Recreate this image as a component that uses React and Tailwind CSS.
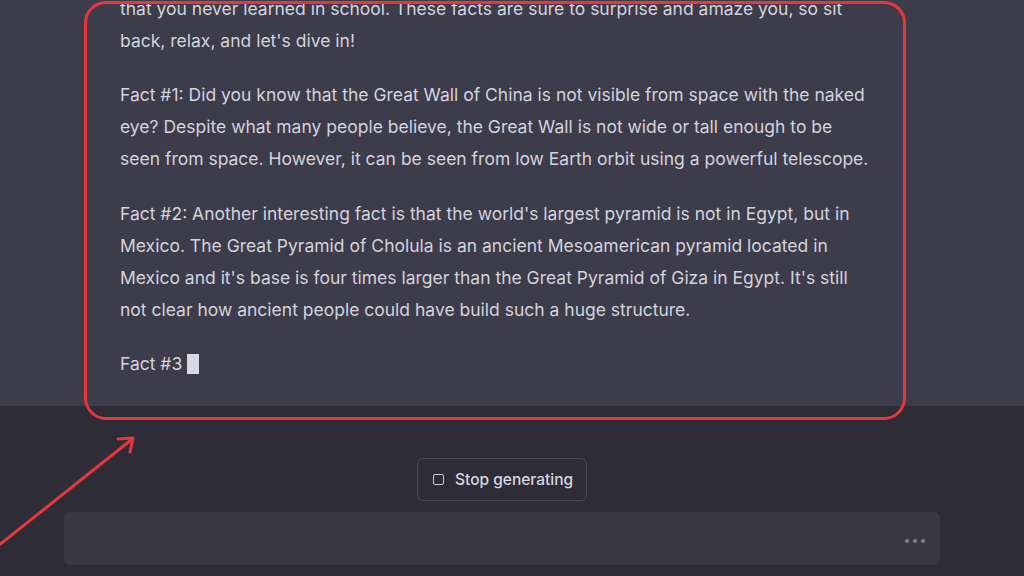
import React from "react";

export default function App() {
  const font = { fontFamily: "Inter, 'Noto Sans', sans-serif" };
  return (
    <div className="relative w-[1024px] h-[576px] overflow-hidden bg-[#2e2d37]" style={font}>
      {/* assistant message */}
      <div className="h-[406px] bg-[#3d3c4a] overflow-hidden">
        <div className="ml-[120px] w-[750px] -mt-[7px] text-[17.5px] leading-[32px] text-[#d3d3dd]">
          <p className="mb-[22px]">
            that you never learned in school. These facts are sure to surprise and amaze you, so sit back, relax, and let's dive in!
          </p>
          <p className="mb-[23px]">
            Fact #1: Did you know that the Great Wall of China is not visible from space with the naked eye? Despite what many people believe, the Great Wall is not wide or tall enough to be seen from space. However, it can be seen from low Earth orbit using a powerful telescope.
          </p>
          <p className="mb-[22px]">
            Fact #2: Another interesting fact is that the world's largest pyramid is not in Egypt, but in Mexico. The Great Pyramid of Cholula is an ancient Mesoamerican pyramid located in Mexico and it's base is four times larger than the Great Pyramid of Giza in Egypt. It's still not clear how ancient people could have build such a huge structure.
          </p>
          <p className="flex items-center">
            Fact #3
            <span className="ml-[5px] inline-block w-[12px] h-[20px] bg-[#d9d9e3]" />
          </p>
        </div>
      </div>

      {/* bottom area */}
      <div className="flex flex-col items-center pt-[52px]">
        <button className="mr-[20px] flex items-center h-[43px] w-[170px] pl-[15px] rounded-[6px] border border-[#4a4955] bg-[#2e2d37] text-[15.5px] text-[#d6d6e0]">
          <span className="w-[11px] h-[11px] border-[1.5px] border-[#c8c8d2] rounded-[2px]" />
          <span className="ml-[11px] font-medium">Stop generating</span>
        </button>
      </div>
      <div className="absolute left-[64px] top-[512px] w-[876px] h-[53px] rounded-[6px] bg-[#393843] flex items-center justify-end pr-[15px]">
        <div className="flex gap-[4px] mt-[4px]">
          <span className="w-[4px] h-[4px] rounded-full bg-[#80808f]" />
          <span className="w-[4px] h-[4px] rounded-full bg-[#80808f]" />
          <span className="w-[4px] h-[4px] rounded-full bg-[#80808f]" />
        </div>
      </div>

      {/* annotation overlay */}
      <div className="absolute left-[84px] top-[1px] w-[822px] h-[419px] rounded-[22px] border-[3px] border-[#e5383d] pointer-events-none" />
      <svg className="absolute left-0 top-0 pointer-events-none" width="1024" height="576">
        <line x1="-2" y1="546" x2="131" y2="440" stroke="#e5383d" strokeWidth="3" strokeLinecap="round" />
        <path d="M118 439 L133 438 L130 452" fill="none" stroke="#e5383d" strokeWidth="3" strokeLinecap="round" strokeLinejoin="round" />
      </svg>
    </div>
  );
}
